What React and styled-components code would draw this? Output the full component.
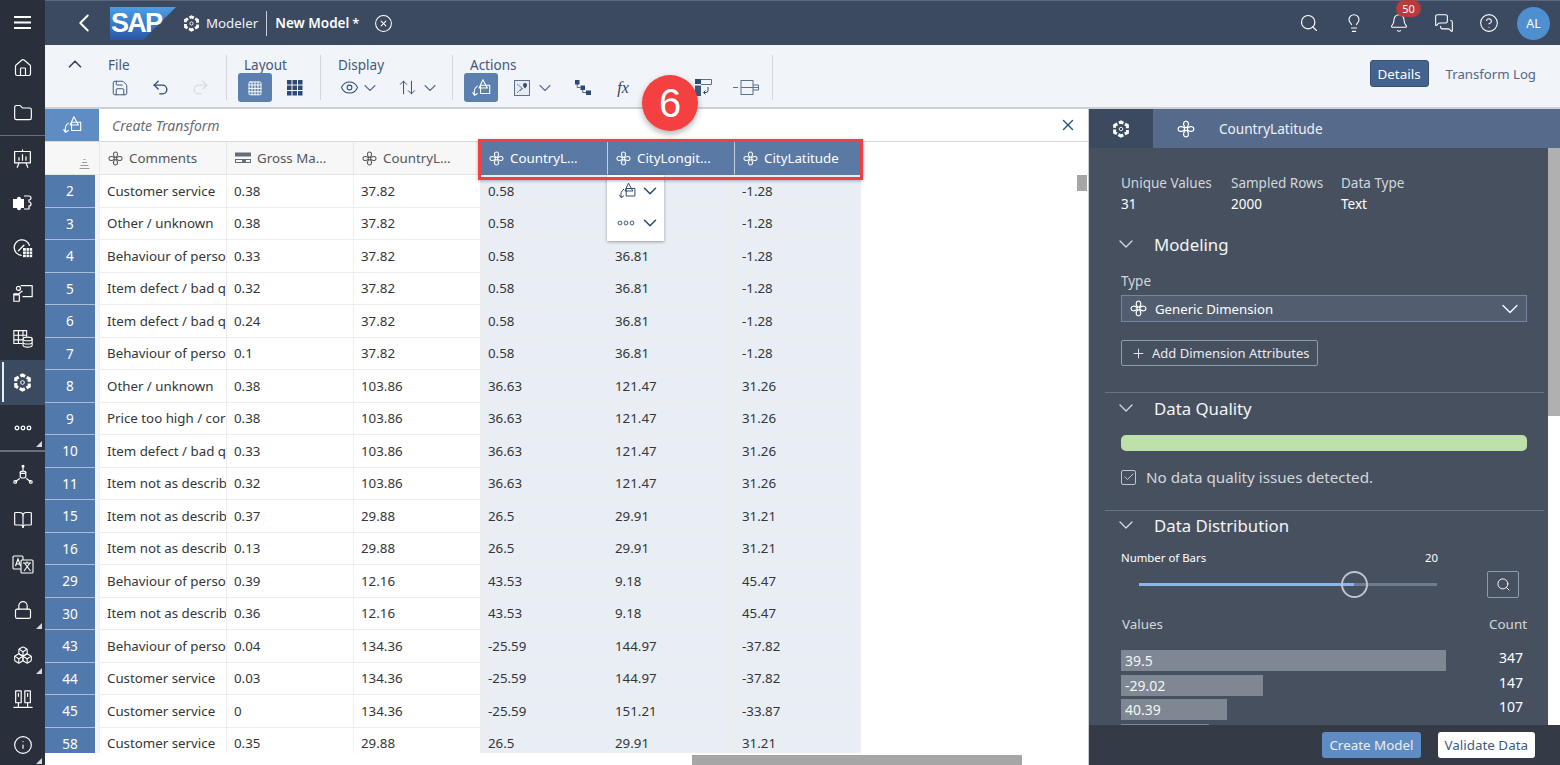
import React from 'react';
import styled, { createGlobalStyle } from 'styled-components';
import {
  House, Folder, BookOpen, Lock, Boxes, Info,
  Search, Lightbulb, Bell, MessagesSquare, CircleHelp, ChevronLeft, ChevronUp,
  ChevronDown, CircleX, Save, Undo2, Redo2, Eye, ArrowUpDown, Plus, Check, X,
} from 'lucide-react';

const FONT = '"Noto Sans", "Open Sans", Arial, sans-serif';

const GlobalStyle = createGlobalStyle`
  html, body {
    margin: 0;
    height: 100%;
    overflow: hidden;
    background: #fff;
  }
  body {
    font-family: ${FONT};
    font-size: 14px;
  }
  * { box-sizing: border-box; }
  svg { flex: none; }
`;

const Page = styled.div`
  display: grid;
  grid-template-columns: 45px 1fr;
  height: 765px;
  width: 1560px;
  position: relative;
  overflow: hidden;
`;

/* left rail */
const Rail = styled.nav`
  background: #2a303b;
  display: flex;
  flex-direction: column;
  color: #fff;
  height: 765px;
  overflow: hidden;
`;

const RailItem = styled.div`
  height: 45px;
  flex: none;
  display: flex;
  align-items: center;
  justify-content: center;
  position: relative;
  background: ${p => (p.$active ? '#3c4a5f' : 'transparent')};
  border-top: ${p => (p.$divided ? '1px solid #6a707b' : 'none')};

  ${p => p.$active && `
    &::before {
      content: '';
      position: absolute;
      left: 2px;
      top: 2px;
      bottom: 3px;
      width: 2px;
      background: #e8edf4;
    }
  `}

  ${p => p.$more && `
    &::after {
      content: '';
      position: absolute;
      right: 3px;
      bottom: 3px;
      border-style: solid;
      border-width: 0 0 6px 6px;
      border-color: transparent transparent #d5d9df transparent;
    }
  `}
`;

const RailGap = styled.div`
  height: 2px;
  flex: none;
  background: #6a707b;
`;

/* right of the rail */
const Main = styled.div`
  display: flex;
  flex-direction: column;
  min-width: 0;
  height: 765px;
`;

const TopBar = styled.header`
  height: 45px;
  flex: none;
  background: #3c4a61;
  border-top: 1px solid #5a6880;
  color: #fff;
  display: flex;
  align-items: center;
  padding: 0 10px 0 24px;
`;

const Back = styled.div`
  width: 30px;
  display: flex;
  justify-content: center;
  margin-right: 11px;
`;

const LogoWrap = styled.div`
  display: flex;
  margin-right: 7px;
`;

const AppName = styled.span`
  font-size: 13.3px;
  margin-left: 6px;
  color: #eef1f5;
`;

const TitleRule = styled.span`
  width: 1px;
  height: 25px;
  background: #c8ced8;
  margin: 0 8px;
`;

const ModelName = styled.span`
  font-size: 13.5px;
  font-weight: 600;
`;

const Star = styled.span`
  font-size: 13px;
  font-weight: 600;
  margin: 0 15px 0 3px;
`;

const TopTools = styled.div`
  margin-left: auto;
  display: flex;
  align-items: center;
  gap: 25px;
`;

const BellWrap = styled.div`
  position: relative;
  display: flex;
`;

const Badge = styled.span`
  position: absolute;
  top: -13px;
  left: 7px;
  width: 25px;
  height: 17px;
  border-radius: 9px;
  background: #bb3a3e;
  font-size: 11px;
  line-height: 17px;
  text-align: center;
`;

const Avatar = styled.div`
  width: 33px;
  height: 33px;
  border-radius: 50%;
  background: #4f8fcf;
  font-size: 12.5px;
  display: flex;
  align-items: center;
  justify-content: center;
  margin-left: -7px;
`;

/* ribbon */
const Ribbon = styled.div`
  height: 64px;
  flex: none;
  background: #f1f4f9;
  border-bottom: 2px solid #cdd1d6;
  display: flex;
  color: #3c5273;
`;

const Collapse = styled.div`
  width: 59px;
  display: flex;
  justify-content: center;
  padding-top: 8px;
  color: #34435c;
`;

const ToolGroup = styled.div`
  width: ${p => p.$width}px;
  margin-top: 10px;
  height: 45px;
  border-right: 1px solid #d3d8df;
  padding-left: ${p => p.$label}px;
  padding-top: 1px;
  flex: none;
`;

const GroupLabel = styled.div`
  font-size: 13.5px;
  line-height: 19px;
  color: #44597a;
`;

const ToolRow = styled.div`
  display: flex;
  align-items: center;
  height: 29px;
  margin-left: ${p => p.$shift}px;
  margin-top: -2px;
`;

const Tool = styled.div`
  width: ${p => p.$w || 40}px;
  height: 29px;
  flex: none;
  display: flex;
  align-items: center;
  justify-content: center;
  gap: ${p => p.$gap || 0}px;
  border-radius: 3px;
  color: ${p => (p.$active ? '#fff' : p.$off ? '#d6dde8' : '#2f4a70')};
  background: ${p => (p.$active ? '#5b7fae' : 'transparent')};
`;

const FxMark = styled.span`
  font-family: "Liberation Serif", serif;
  font-style: italic;
  font-size: 16px;
  color: #34435c;
`;

const ViewSwitch = styled.div`
  margin-left: auto;
  display: flex;
  align-items: center;
  padding: 15px 24px 0 0;
  align-self: flex-start;
`;

const ViewOn = styled.div`
  width: 59px;
  height: 27px;
  border-radius: 3px;
  background: #43628e;
  border: 1px solid #37506f;
  color: #fff;
  font-size: 13.4px;
  display: flex;
  align-items: center;
  justify-content: center;
`;

const ViewOff = styled.div`
  margin-left: 17px;
  font-size: 13.2px;
  color: #53688a;
`;

/* work area */
const Work = styled.div`
  flex: 1;
  min-height: 0;
  display: flex;
`;

const GridPane = styled.section`
  width: 1044px;
  flex: none;
  display: flex;
  flex-direction: column;
  border-right: 1px solid #c9ccd0;
`;

const FormulaBar = styled.div`
  height: 33px;
  flex: none;
  display: flex;
  align-items: center;
  border-bottom: 1px solid #d9d9d9;
  background: #fff;
`;

const FormulaIcon = styled.div`
  width: 54px;
  height: 100%;
  background: #5f8cc3;
  color: #fff;
  display: flex;
  align-items: center;
  justify-content: center;
`;

const FormulaText = styled.div`
  flex: 1;
  padding-left: 13px;
  font-style: italic;
  font-size: 14px;
  color: #6a6d70;
`;

const FormulaClose = styled.div`
  width: 40px;
  display: flex;
  justify-content: center;
  color: #28507f;
`;

const TableWrap = styled.div`
  flex: 1;
  min-height: 0;
  display: flex;
  position: relative;
  overflow: hidden;
`;

const Table = styled.div`
  flex: 1;
  min-width: 0;
`;

const TableRow = styled.div`
  display: grid;
  grid-template-columns: 50px 4px repeat(6, 127px);
  height: ${p => (p.$head ? 33 : 32.5)}px;
`;

const HeadCorner = styled.div`
  grid-column: span 2;
  background: #f7f7f7;
  border-bottom: 1px solid #e5e5e5;
  display: flex;
  justify-content: flex-end;
  align-items: flex-end;
  padding: 0 9px 5px 0;
  color: #9a9a9a;
`;

const HeadCell = styled.div`
  display: flex;
  align-items: center;
  gap: 6px;
  padding-left: 8px;
  font-size: 13.3px;
  white-space: nowrap;
  overflow: hidden;
  background: ${p => (p.$on ? '#5a79a5' : '#f7f7f7')};
  color: ${p => (p.$on ? '#fff' : '#53565a')};
  border-left: 1px solid ${p => (p.$on ? '#c3d0e0' : '#e8e8e8')};
  border-bottom: 1px solid ${p => (p.$on ? '#5a79a5' : '#e5e5e5')};
`;

const RowNum = styled.div`
  background: #5279ab;
  color: #fff;
  font-size: 13.6px;
  display: flex;
  align-items: center;
  justify-content: center;
  border-bottom: 1px solid #a9bdd6;
`;

const RowGap = styled.div`
  background: #f3f3f3;
`;

const Cell = styled.div`
  display: flex;
  align-items: center;
  padding-left: 7px;
  font-size: 13.3px;
  color: #32363a;
  white-space: nowrap;
  overflow: hidden;
  background: ${p => (p.$on ? '#e9eef5' : '#fff')};
  border-left: 1px solid #eeeeee;
  border-bottom: 1px solid #eeeeee;
  ${p => p.$last && 'border-right: 1px solid #eeeeee;'}
`;

const VScroll = styled.div`
  width: 11px;
  flex: none;
`;

const VThumb = styled.div`
  height: 16px;
  margin-top: 33px;
  width: 10px;
  background: #a6a6a6;
`;

const HScroll = styled.div`
  height: 12px;
  flex: none;
  padding: 2px 0 0 647px;
  background: #fff;
`;

const HThumb = styled.div`
  width: 330px;
  height: 10px;
  background: #a6a6a6;
`;

const Popup = styled.div`
  position: absolute;
  left: 562px;
  top: 33px;
  width: 57px;
  height: 66px;
  background: #fff;
  box-shadow: 0 1px 3px rgba(0, 0, 0, 0.35);
  display: flex;
  flex-direction: column;
  color: #2f4a70;
`;

const PopupRow = styled.div`
  height: 32px;
  display: flex;
  align-items: center;
  justify-content: space-between;
  padding: 0 3px 0 10px;
`;

/* side panel */
const Side = styled.aside`
  flex: 1;
  min-width: 0;
  display: flex;
  flex-direction: column;
  background: #47505f;
  color: #fff;
`;

const SideHead = styled.div`
  height: 39px;
  flex: none;
  display: flex;
  background: #566a8b;
  align-items: center;
  font-size: 13.6px;
`;

const SideTab = styled.div`
  width: 64px;
  height: 100%;
  background: #3c4a5f;
  display: flex;
  align-items: center;
  justify-content: center;
  margin-right: 24px;
`;

const SideName = styled.span`
  margin-left: 24px;
  color: #eef1f5;
`;

const SideMiddle = styled.div`
  flex: 1;
  min-height: 0;
  display: flex;
`;

const SideBody = styled.div`
  flex: 1;
  min-width: 0;
  padding: 25px 4px 0 16px;
  overflow: hidden;
`;

const SideScroll = styled.div`
  width: 12px;
  flex: none;
  background: #fff;
`;

const SideThumb = styled.div`
  height: 268px;
  background: #b0b0b0;
`;

const Stats = styled.div`
  display: grid;
  grid-template-columns: 110px 110px 80px;
  padding-left: 16px;
  font-size: 13.5px;
  line-height: 21px;
`;

const StatLabel = styled.div`
  color: #d3d7dc;
`;

const StatValue = styled.div`
  color: #fff;
`;

const SectionHead = styled.div`
  display: flex;
  align-items: center;
  height: 24px;
  padding-left: 9px;
  font-size: 16.8px;
  color: #f3f5f7;
  svg { margin-right: 16px; color: #d5dae1; }
`;

const Section = styled.section`
  padding-bottom: ${p => p.$pad || 0}px;
  border-bottom: ${p => (p.$line ? '1px solid #647489' : 'none')};
  padding-top: ${p => p.$top || 0}px;
`;

const Inset = styled.div`
  padding: 0 17px 0 16px;
`;

const FieldLabel = styled.div`
  font-size: 13.5px;
  color: #d3d7dc;
  margin-top: 15px;
  line-height: 20px;
`;

const Select = styled.div`
  height: 27px;
  margin-top: 4px;
  background: #525e6f;
  border: 1px solid #7587a0;
  display: flex;
  align-items: center;
  padding: 0 2px 0 8px;
  gap: 8px;
  font-size: 13.2px;
  svg:last-child { margin-left: auto; }
`;

const OutlineButton = styled.div`
  display: inline-flex;
  align-items: center;
  gap: 6px;
  height: 26px;
  margin-top: 18px;
  padding: 0 7px 0 9px;
  border: 1px solid #8c9bb0;
  border-radius: 2px;
  font-size: 13px;
  color: #e8ebef;
`;

const QualityBar = styled.div`
  height: 16px;
  margin-top: 15px;
  border-radius: 5px;
  background: #bde1a8;
`;

const CheckLine = styled.div`
  display: flex;
  align-items: center;
  gap: 10px;
  margin-top: 16px;
  font-size: 15.2px;
  color: #d3d7dc;
`;

const CheckBox = styled.div`
  width: 15px;
  height: 15px;
  border: 1px solid #bfc5cd;
  border-radius: 2px;
  display: flex;
  align-items: center;
  justify-content: center;
`;

const BarsHead = styled.div`
  display: flex;
  justify-content: space-between;
  width: 317px;
  margin-top: 13px;
  font-size: 11.4px;
  line-height: 16px;
`;

const SliderLine = styled.div`
  display: flex;
  align-items: center;
  height: 28px;
  margin-top: 4px;
`;

const Slider = styled.div`
  width: 298px;
  margin-left: 18px;
  height: 3px;
  background: #6e7c90;
  position: relative;
`;

const SliderFill = styled.div`
  height: 100%;
  background: #8ab6ec;
`;

const SliderKnob = styled.div`
  position: absolute;
  top: -12px;
  width: 27px;
  height: 27px;
  margin-left: -13px;
  border-radius: 50%;
  border: 2px solid #bcc4ce;
`;

const SearchBtn = styled.div`
  width: 32px;
  height: 27px;
  margin-left: 50px;
  border: 1px solid #8c9bb0;
  border-radius: 2px;
  display: flex;
  align-items: center;
  justify-content: center;
`;

const BarTitles = styled.div`
  display: flex;
  justify-content: space-between;
  margin-top: 17px;
  font-size: 13.4px;
  line-height: 18px;
  color: #d3d7dc;
  padding-left: 1px;
`;

const BarList = styled.div`
  margin-top: 17px;
  display: flex;
  flex-direction: column;
  gap: 3.5px;
`;

const BarRow = styled.div`
  display: flex;
  justify-content: space-between;
  align-items: flex-start;
  height: 21px;
  font-size: 14px;
`;

const Bar = styled.div`
  height: 21px;
  background: #7f8792;
  padding: 1px 0 0 4px;
  line-height: 20px;
  color: #f3f5f7;
`;

const BarCount = styled.div`
  line-height: 16px;
  padding-right: 4px;
`;

const SideFoot = styled.div`
  height: 40px;
  flex: none;
  background: #343a46;
  display: flex;
  align-items: center;
  justify-content: flex-end;
  gap: 17px;
  padding: 0 25px 0 0;
`;

const PrimaryBtn = styled.div`
  height: 26px;
  padding: 0 7px;
  background: #5f8cc3;
  border-radius: 3px;
  display: flex;
  align-items: center;
  font-size: 13.4px;
  color: #e8eef6;
`;

const PlainBtn = styled(PrimaryBtn)`
  background: #fff;
  color: #3e5a80;
`;

/* tutorial marks on top of the screenshot */
const Callout = styled.div`
  position: absolute;
  left: 642px;
  top: 75px;
  width: 56px;
  height: 56px;
  border-radius: 50%;
  background: #f44040;
  color: #fff;
  font-family: "Liberation Sans", Arial, sans-serif;
  font-size: 40px;
  display: flex;
  align-items: center;
  justify-content: center;
  box-shadow: 0 3px 6px rgba(0, 0, 0, 0.3);
`;

const RedFrame = styled.div`
  position: absolute;
  left: 478px;
  top: 139px;
  width: 385px;
  height: 41px;
  border: 3px solid #f23f3f;
  box-shadow: 0 1px 3px rgba(0, 0, 0, 0.3);
`;

/* drawn icons */
const Svg = ({ size = 18, children, sw = 1.3 }) => (
  <svg width={size} height={size} viewBox="0 0 24 24" fill="none" stroke="currentColor"
    strokeWidth={sw} strokeLinecap="round" strokeLinejoin="round">
    {children}
  </svg>
);

const Flower = ({ size = 15 }) => (
  <Svg size={size} sw={1.7}>
    <circle cx="12" cy="12" r="2.2" />
    <path d="M10.5 10C7.500 6 8.500 1.500 12 1.500S16.500 6 13.500 10" />
    <path d="M10.500 14C7.500 18 8.500 22.500 12 22.500S16.500 18 13.500 14" />
    <path d="M10 10.500C6 7.500 1.500 8.500 1.500 12S6 16.500 10 13.500" />
    <path d="M14 10.500C18 7.500 22.500 8.500 22.500 12S18 16.500 14 13.500" />
  </Svg>
);

const ModelIcon = ({ size = 18 }) => (
  <svg width={size} height={size} viewBox="0 0 24 24" fill="none" stroke="currentColor" strokeWidth="4">
    <path d="M12 2.500l8.500 4.750v9.500L12 21.500l-8.500-4.750v-9.500z" strokeDasharray="7.400 2.350" strokeDashoffset="3.700" />
    <path d="M12 9.500l2.200 1.250v2.500L12 14.500l-2.200-1.250v-2.500z" strokeWidth="1.200" />
  </svg>
);

const TransformIcon = ({ size = 22 }) => (
  <Svg size={size} sw={1.2}>
    <path d="M14 3l5 9h-9z" />
    <rect x="11.500" y="9" width="10" height="9" />
    <path d="M8 10C5 12 4 15 5 19" />
    <path d="M3 17l2 3 3-2" />
  </Svg>
);

const GridFine = ({ size = 18 }) => (
  <Svg size={size} sw={1.3}>
    <rect x="4" y="4" width="16" height="17" rx="1.500" />
    <path d="M4 8h16M4 12.500h16M4 17h16M8 4v17M12 4v17M16 4v17" />
  </Svg>
);

const GridBold = () => (
  <svg width="16" height="16" viewBox="0 0 16 16" fill="currentColor">
    {[0, 5.5, 11].map(y => [0, 5.5, 11].map(x => (
      <rect key={`${x}-${y}`} x={x} y={y} width="4.500" height="4.500" />
    )))}
  </svg>
);

const MapIcon = () => (
  <svg width="16" height="16" viewBox="0 0 16 16" fill="#e6ebf2" stroke="#5b6f8e">
    <rect x="0.500" y="0.500" width="15" height="15" />
    <path d="M3 4l5 4-5 5M6 11l3-3" fill="none" strokeWidth="0.800" />
    <path d="M11 3a2 2 0 0 1 2 2c0 1.500-2 3.500-2 3.500S9 6.500 9 5a2 2 0 0 1 2-2z" fill="#2f4a70" stroke="none" />
  </svg>
);

const TreeIcon = () => (
  <svg width="16" height="16" viewBox="0 0 16 16" fill="#2f4a70" stroke="none">
    <rect x="0" y="0" width="4.500" height="4.500" />
    <rect x="5.500" y="5.500" width="4.500" height="4.500" />
    <rect x="11" y="10.500" width="5" height="4.500" />
    <path d="M2.200 4v3.500h3.300M7.700 10v2.500H11" fill="none" stroke="#2f4a70" strokeWidth="0.800" />
  </svg>
);

const PivotIcon = () => (
  <svg width="17" height="17" viewBox="0 0 17 17" fill="none" stroke="#5b6f8e">
    <rect x="0" y="0" width="6" height="5" fill="#2f4a70" stroke="none" />
    <rect x="0" y="6.500" width="6" height="10.500" fill="#3f5a80" stroke="none" />
    <path d="M6 .500h10.500v5H6" />
    <path d="M13 8v3.500a2 2 0 0 1-2 2H9M10.500 11.500l-2 2 2 2" stroke="#2f4a70" />
  </svg>
);

const SplitIcon = () => (
  <svg width="26" height="15" viewBox="0 0 26 15" fill="none" stroke="#5b6f8e">
    <path d="M0 7.500h5" />
    <rect x="8" y="0.500" width="12" height="14" />
    <path d="M8 7.500h17.500M25.500 5v5M20 5h5.500M20 10h5.500" />
  </svg>
);

const TableSort = () => (
  <svg width="11" height="11" viewBox="0 0 11 11" stroke="currentColor" fill="none">
    <path d="M4.500 1.500h2M3 4.500h5M1.500 7.500h8M0.500 10.500h10" />
  </svg>
);

const MeasureIcon = () => (
  <svg width="16" height="14" viewBox="0 0 16 14" fill="none" stroke="#646b76">
    <rect x="0.500" y="2" width="15" height="3" fill="#646b76" />
    <rect x="0.500" y="8.500" width="15" height="3" />
    <circle cx="9" cy="10" r="1.500" fill="#646b76" />
  </svg>
);

const Dots = ({ color = 'currentColor' }) => (
  <svg width="18" height="6" viewBox="0 0 18 6" fill="none" stroke={color} strokeWidth="1.300">
    <circle cx="3" cy="3" r="1.800" />
    <circle cx="9" cy="3" r="1.800" />
    <circle cx="15" cy="3" r="1.800" />
  </svg>
);

const Hamburger = () => (
  <svg width="17" height="13" viewBox="0 0 17 13" fill="#fff">
    <rect y="0" width="17" height="2" />
    <rect y="5.500" width="17" height="2" />
    <rect y="11" width="17" height="2" />
  </svg>
);

const BoardIcon = () => (
  <Svg size={21} sw={1.400}>
    <rect x="3" y="4" width="18" height="13" />
    <path d="M12 2v2M8 17l-2 5M16 17l2 5" />
    <path d="M8 14v-3M12 14V7.500M16 14v-4" />
  </Svg>
);

const PuzzleIcon = () => (
  <svg width="21" height="20" viewBox="0 0 21 20" stroke="#fff">
    <path d="M1 6h4c0-3 4-3 4 0h3v9H9c0 3-4 3-4 0H1z" fill="#fff" stroke="none" />
    <path d="M12 3h5a2 2 0 0 1 0 4v2a2 2 0 0 1 0 4v3h-5" fill="none" strokeWidth="1.200" />
  </svg>
);

const GaugeGrid = () => (
  <Svg size={22} sw={1.400}>
    <path d="M10 20a8.500 8.500 0 1 1 9-11" />
    <path d="M7 15l6-6" />
    <rect x="12" y="12" width="10" height="10" fill="currentColor" stroke="none" />
    <path d="M12 15.500h10M12 19h10M15.500 12v10M19 12v10" stroke="#2a303b" strokeWidth="0.800" />
  </Svg>
);

const SignIcon = () => (
  <Svg size={22} sw={1.300}>
    <path d="M10 4h12v12H12" />
    <circle cx="7" cy="7" r="2.200" />
    <path d="M2 21v-8h5l4-3M2 14h6v7H2" />
  </Svg>
);

const TableDb = () => (
  <Svg size={22} sw={1.200}>
    <path d="M11 18H2V4h14v6M2 9h14M2 14h9M7 4v14M12 4v6" />
    <ellipse cx="17" cy="13" rx="5" ry="2" />
    <path d="M12 13v7c0 1 2 2 5 2s5-1 5-2v-7M12 16.500c0 1 2 2 5 2s5-1 5-2" />
  </Svg>
);

const NetworkDb = () => (
  <Svg size={22} sw={1.300}>
    <ellipse cx="12" cy="9" rx="3" ry="1.300" />
    <path d="M9 9v5c0 .7 1.300 1.300 3 1.300s3-.6 3-1.300V9M12 2v5M8 16l-4 3M16 16l4 3" />
    <circle cx="12" cy="2.500" r="1" />
    <circle cx="3.500" cy="19.500" r="1.500" />
    <circle cx="20.500" cy="19.500" r="1.500" />
  </Svg>
);

const Translate = () => (
  <svg width="22" height="20" viewBox="0 0 22 20" fill="none" stroke="currentColor" strokeWidth="1.100">
    <rect x="1" y="1" width="10" height="13" rx="1" />
    <rect x="9" y="5" width="12" height="13" rx="1" fill="#2a303b" />
    <path d="M3.500 11l2.500-7 2.500 7M4.300 9h3.400" />
    <path d="M11 8h8M15 6.500V8M12.500 8l6 8M18 8l-6 8" />
  </svg>
);

const ServerPair = () => (
  <Svg size={22} sw={1.300}>
    <rect x="4" y="2" width="6" height="13" />
    <rect x="14" y="2" width="6" height="13" />
    <path d="M7 5v3M17 5v3M7 15v5M17 15v5M2 20h20" />
  </Svg>
);

const SapLogo = () => (
  <svg width="66" height="33" viewBox="0 0 66 33">
    <defs>
      <linearGradient id="sapBlue" x1="0" y1="0" x2="0" y2="1">
        <stop offset="0" stopColor="#4a9fe6" />
        <stop offset="1" stopColor="#2a56a8" />
      </linearGradient>
    </defs>
    <path d="M0 0H66L33 33H0Z" fill="url(#sapBlue)" />
    <text x="1" y="25" fontFamily="Liberation Sans, Arial, sans-serif" fontSize="27"
      fontWeight="700" fill="#fff" letterSpacing="-1.800">SAP</text>
  </svg>
);

const railTop = [
  { icon: <House size={20} strokeWidth={1.4} /> },
  { icon: <Folder size={20} strokeWidth={1.4} /> },
  { icon: <BoardIcon />, divided: true },
  { icon: <PuzzleIcon /> },
  { icon: <GaugeGrid /> },
  { icon: <SignIcon /> },
  { icon: <TableDb /> },
  { icon: <ModelIcon size={19} />, active: true },
  { icon: <Dots />, more: true },
];

const railBottom = [
  { icon: <NetworkDb /> },
  { icon: <BookOpen size={20} strokeWidth={1.4} /> },
  { icon: <Translate /> },
  { icon: <Lock size={20} strokeWidth={1.4} />, more: true },
  { icon: <Boxes size={20} strokeWidth={1.3} />, more: true },
  { icon: <ServerPair /> },
  { icon: <Info size={20} strokeWidth={1.4} />, more: true },
];

const rows = [
  [2, 'Customer service', '0.38', '37.82', '0.58', '36.81', '-1.28'],
  [3, 'Other / unknown', '0.38', '37.82', '0.58', '36.81', '-1.28'],
  [4, 'Behaviour of perso', '0.33', '37.82', '0.58', '36.81', '-1.28'],
  [5, 'Item defect / bad q', '0.32', '37.82', '0.58', '36.81', '-1.28'],
  [6, 'Item defect / bad q', '0.24', '37.82', '0.58', '36.81', '-1.28'],
  [7, 'Behaviour of perso', '0.1', '37.82', '0.58', '36.81', '-1.28'],
  [8, 'Other / unknown', '0.38', '103.86', '36.63', '121.47', '31.26'],
  [9, 'Price too high / cor', '0.38', '103.86', '36.63', '121.47', '31.26'],
  [10, 'Item defect / bad q', '0.33', '103.86', '36.63', '121.47', '31.26'],
  [11, 'Item not as describ', '0.32', '103.86', '36.63', '121.47', '31.26'],
  [15, 'Item not as describ', '0.37', '29.88', '26.5', '29.91', '31.21'],
  [16, 'Item not as describ', '0.13', '29.88', '26.5', '29.91', '31.21'],
  [29, 'Behaviour of perso', '0.39', '12.16', '43.53', '9.18', '45.47'],
  [30, 'Item not as describ', '0.36', '12.16', '43.53', '9.18', '45.47'],
  [43, 'Behaviour of perso', '0.04', '134.36', '-25.59', '144.97', '-37.82'],
  [44, 'Customer service', '0.03', '134.36', '-25.59', '144.97', '-37.82'],
  [45, 'Customer service', '0', '134.36', '-25.59', '151.21', '-33.87'],
  [58, 'Customer service', '0.35', '29.88', '26.5', '29.91', '31.21'],
];

const columns = [
  { name: 'Comments' },
  { name: 'Gross Ma...', measure: true },
  { name: 'CountryL...' },
  { name: 'CountryL...', on: true },
  { name: 'CityLongit...', on: true },
  { name: 'CityLatitude', on: true },
];

const bars = [
  { label: '39.5', width: 325, count: 347 },
  { label: '-29.02', width: 142, count: 147 },
  { label: '40.39', width: 106, count: 107 },
  { label: '', width: 88, count: '' },
];

const Chev = () => <ChevronDown size={20} strokeWidth={1.3} color="#5b6f8e" />;
const SectionChev = () => <ChevronDown size={24} strokeWidth={1.3} />;

export default function App() {
  return (
    <Page>
      <GlobalStyle />
      <Rail>
        <RailItem><Hamburger /></RailItem>
        {railTop.map((item, i) => (
          <RailItem key={i} $active={item.active} $more={item.more} $divided={item.divided}>
            {item.icon}
          </RailItem>
        ))}
        <RailGap />
        {railBottom.map((item, i) => (
          <RailItem key={i} $more={item.more}>{item.icon}</RailItem>
        ))}
      </Rail>

      <Main>
        <TopBar>
          <Back><ChevronLeft size={30} strokeWidth={1.5} /></Back>
          <LogoWrap><SapLogo /></LogoWrap>
          <ModelIcon size={17} />
          <AppName>Modeler</AppName>
          <TitleRule />
          <ModelName>New Model</ModelName>
          <Star>*</Star>
          <CircleX size={19} strokeWidth={1.3} />
          <TopTools>
            <Search size={20} strokeWidth={1.4} />
            <Lightbulb size={20} strokeWidth={1.3} />
            <BellWrap>
              <Bell size={20} strokeWidth={1.3} />
              <Badge>50</Badge>
            </BellWrap>
            <MessagesSquare size={20} strokeWidth={1.3} />
            <CircleHelp size={20} strokeWidth={1.3} />
            <Avatar>AL</Avatar>
          </TopTools>
        </TopBar>

        <Ribbon>
          <Collapse><ChevronUp size={22} strokeWidth={1.8} /></Collapse>
          <ToolGroup $width={123} $label={4}>
            <GroupLabel>File</GroupLabel>
            <ToolRow $shift={-8}>
              <Tool $w={40}><Save size={18} strokeWidth={1.2} /></Tool>
              <Tool $w={40}><Undo2 size={19} strokeWidth={1.7} /></Tool>
              <Tool $w={40} $off><Redo2 size={19} strokeWidth={1.7} /></Tool>
            </ToolRow>
          </ToolGroup>
          <ToolGroup $width={94} $label={17}>
            <GroupLabel>Layout</GroupLabel>
            <ToolRow $shift={-6}>
              <Tool $w={34} $active><GridFine /></Tool>
              <Tool $w={46}><GridBold /></Tool>
            </ToolRow>
          </ToolGroup>
          <ToolGroup $width={132} $label={17}>
            <GroupLabel>Display</GroupLabel>
            <ToolRow $shift={-6}>
              <Tool $w={55} $gap={1}><Eye size={19} strokeWidth={1.3} /><Chev /></Tool>
              <Tool $w={64} $gap={2.5}><ArrowUpDown size={19} strokeWidth={1.2} /><Chev /></Tool>
            </ToolRow>
          </ToolGroup>
          <ToolGroup $width={320} $label={17}>
            <GroupLabel>Actions</GroupLabel>
            <ToolRow $shift={-6}>
              <Tool $w={34} $active><TransformIcon /></Tool>
              <Tool $w={73} $gap={5}><MapIcon /><Chev /></Tool>
              <Tool $w={24}><TreeIcon /></Tool>
              <Tool $w={56}><FxMark>fx</FxMark></Tool>
              <Tool $w={32} />
              <Tool $w={40}><PivotIcon /></Tool>
              <Tool $w={46}><SplitIcon /></Tool>
            </ToolRow>
          </ToolGroup>
          <ViewSwitch>
            <ViewOn>Details</ViewOn>
            <ViewOff>Transform Log</ViewOff>
          </ViewSwitch>
        </Ribbon>

        <Work>
          <GridPane>
            <FormulaBar>
              <FormulaIcon><TransformIcon /></FormulaIcon>
              <FormulaText>Create Transform</FormulaText>
              <FormulaClose><X size={18} strokeWidth={1.8} /></FormulaClose>
            </FormulaBar>
            <TableWrap>
              <Table>
                <TableRow $head>
                  <HeadCorner><TableSort /></HeadCorner>
                  {columns.map((col, i) => (
                    <HeadCell key={i} $on={col.on}>
                      {col.measure ? <MeasureIcon /> : <Flower />}
                      {col.name}
                    </HeadCell>
                  ))}
                </TableRow>
                {rows.map(row => (
                  <TableRow key={row[0]}>
                    <RowNum>{row[0]}</RowNum>
                    <RowGap />
                    {row.slice(1).map((value, i) => (
                      <Cell key={i} $on={i >= 3} $last={i === 5}>{value}</Cell>
                    ))}
                  </TableRow>
                ))}
              </Table>
              <VScroll><VThumb /></VScroll>
              <Popup>
                <PopupRow><TransformIcon size={20} /><ChevronDown size={22} strokeWidth={1.7} /></PopupRow>
                <PopupRow><Dots color="#6d7f99" /><ChevronDown size={22} strokeWidth={1.7} /></PopupRow>
              </Popup>
            </TableWrap>
            <HScroll><HThumb /></HScroll>
          </GridPane>

          <Side>
            <SideHead>
              <SideTab><ModelIcon /></SideTab>
              <Flower size={18} />
              <SideName>CountryLatitude</SideName>
            </SideHead>
            <SideMiddle>
              <SideBody>
                <Stats>
                  <StatLabel>Unique Values</StatLabel>
                  <StatLabel>Sampled Rows</StatLabel>
                  <StatLabel>Data Type</StatLabel>
                  <StatValue>31</StatValue>
                  <StatValue>2000</StatValue>
                  <StatValue>Text</StatValue>
                </Stats>
                <Section $line $pad={26} $top={17}>
                  <SectionHead><SectionChev />Modeling</SectionHead>
                  <Inset>
                    <FieldLabel>Type</FieldLabel>
                    <Select>
                      <Flower size={17} />
                      Generic Dimension
                      <ChevronDown size={28} strokeWidth={1.1} />
                    </Select>
                    <OutlineButton><Plus size={15} strokeWidth={1.5} />Add Dimension Attributes</OutlineButton>
                  </Inset>
                </Section>
                <Section $line $pad={23} $top={3}>
                  <SectionHead><SectionChev />Data Quality</SectionHead>
                  <Inset>
                    <QualityBar />
                    <CheckLine>
                      <CheckBox><Check size={12} strokeWidth={1.8} /></CheckBox>
                      No data quality issues detected.
                    </CheckLine>
                  </Inset>
                </Section>
                <Section $top={2}>
                  <SectionHead><SectionChev />Data Distribution</SectionHead>
                  <Inset>
                    <BarsHead><span>Number of Bars</span><span>20</span></BarsHead>
                    <SliderLine>
                      <Slider>
                        <SliderFill style={{ width: '72%' }} />
                        <SliderKnob style={{ left: '72%' }} />
                      </Slider>
                      <SearchBtn><Search size={15} strokeWidth={1.5} /></SearchBtn>
                    </SliderLine>
                    <BarTitles><span>Values</span><span>Count</span></BarTitles>
                    <BarList>
                      {bars.map((bar, i) => (
                        <BarRow key={i}>
                          <Bar style={{ width: bar.width }}>{bar.label}</Bar>
                          <BarCount>{bar.count}</BarCount>
                        </BarRow>
                      ))}
                    </BarList>
                  </Inset>
                </Section>
              </SideBody>
              <SideScroll><SideThumb /></SideScroll>
            </SideMiddle>
            <SideFoot>
              <PrimaryBtn>Create Model</PrimaryBtn>
              <PlainBtn>Validate Data</PlainBtn>
            </SideFoot>
          </Side>
        </Work>
      </Main>

      <RedFrame />
      <Callout>6</Callout>
    </Page>
  );
}
